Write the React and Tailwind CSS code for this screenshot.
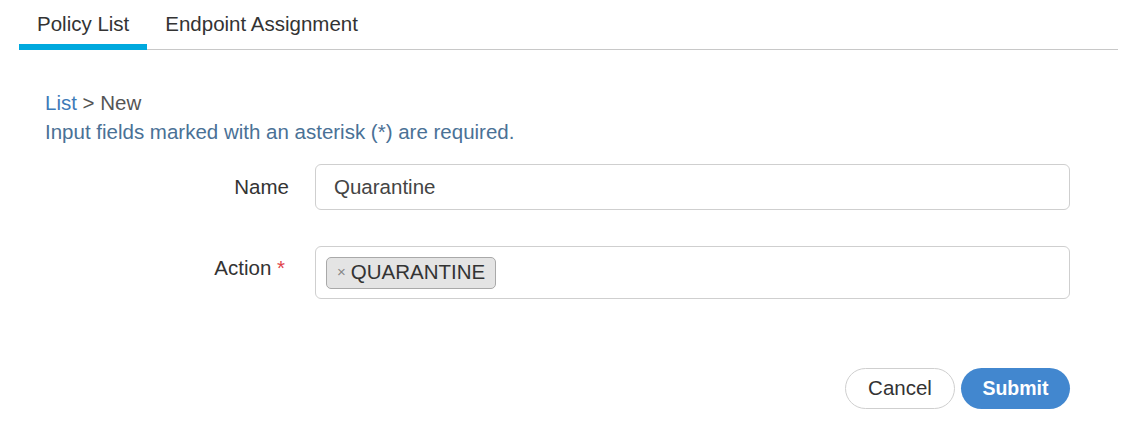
export default function App() {
  return (
    <div
      className="w-[1132px] h-[426px] bg-white text-[#333] overflow-hidden"
      style={{ fontFamily: '"Liberation Sans", Arial, sans-serif' }}
    >
      {/* Tabs */}
      <div className="pt-[11px] px-[19px]">
        <div className="flex border-b border-[#c8c8c8] w-[1099px]">
          <div className="px-[18px] pb-[7px] border-b-[6px] border-[#00a9de] -mb-[1px] text-[20.5px] leading-[26px] text-[#333]">
            Policy List
          </div>
          <div className="px-[18px] pb-[7px] text-[20.5px] leading-[26px] text-[#333]">
            Endpoint Assignment
          </div>
        </div>
      </div>

      {/* Breadcrumb */}
      <div className="pl-[45px] pt-[38px] text-[20.5px] leading-[29px]">
        <div>
          <span className="text-[#3d7ab8]">List</span>
          <span className="text-[#555]"> &gt; New</span>
        </div>
        <div className="text-[#4a7196]">Input fields marked with an asterisk (*) are required.</div>
      </div>

      {/* Form */}
      <div className="flex flex-col gap-[36px] mt-[18px]">
        <div className="flex items-center">
          <div className="w-[290px] text-right pr-[1px] text-[20.5px] text-[#333]">Name</div>
          <div className="ml-[25px] w-[755px] h-[46px] border border-[#cfcfcf] rounded-[6px] flex items-center px-[18px] text-[20.5px] text-[#444]">
            Quarantine
          </div>
        </div>
        <div className="flex items-center">
          <div className="w-[290px] text-right pr-[5px] text-[20.5px] text-[#333] -mt-[8px]">
            Action <span className="text-[#e0434a]">*</span>
          </div>
          <div className="ml-[25px] w-[755px] h-[53px] border border-[#cfcfcf] rounded-[6px] flex items-center px-[10px]">
            <span className="flex items-center h-[32px] pl-[10px] pr-[10px] bg-[#e4e4e4] border border-[#a9a9a9] rounded-[5px] text-[20.5px] text-[#333]">
              <span className="text-[#888] text-[15px] mr-[5px]">×</span>QUARANTINE
            </span>
          </div>
        </div>
      </div>

      {/* Buttons */}
      <div className="flex justify-end gap-[6px] w-[1070px] mt-[69px]">
        <button className="w-[110px] h-[41px] rounded-full border border-[#cfcfcf] bg-white text-[20.5px] text-[#333]">
          Cancel
        </button>
        <button className="w-[109px] h-[41px] rounded-full bg-[#4287cf] text-white text-[19.5px] font-bold">
          Submit
        </button>
      </div>
    </div>
  );
}
